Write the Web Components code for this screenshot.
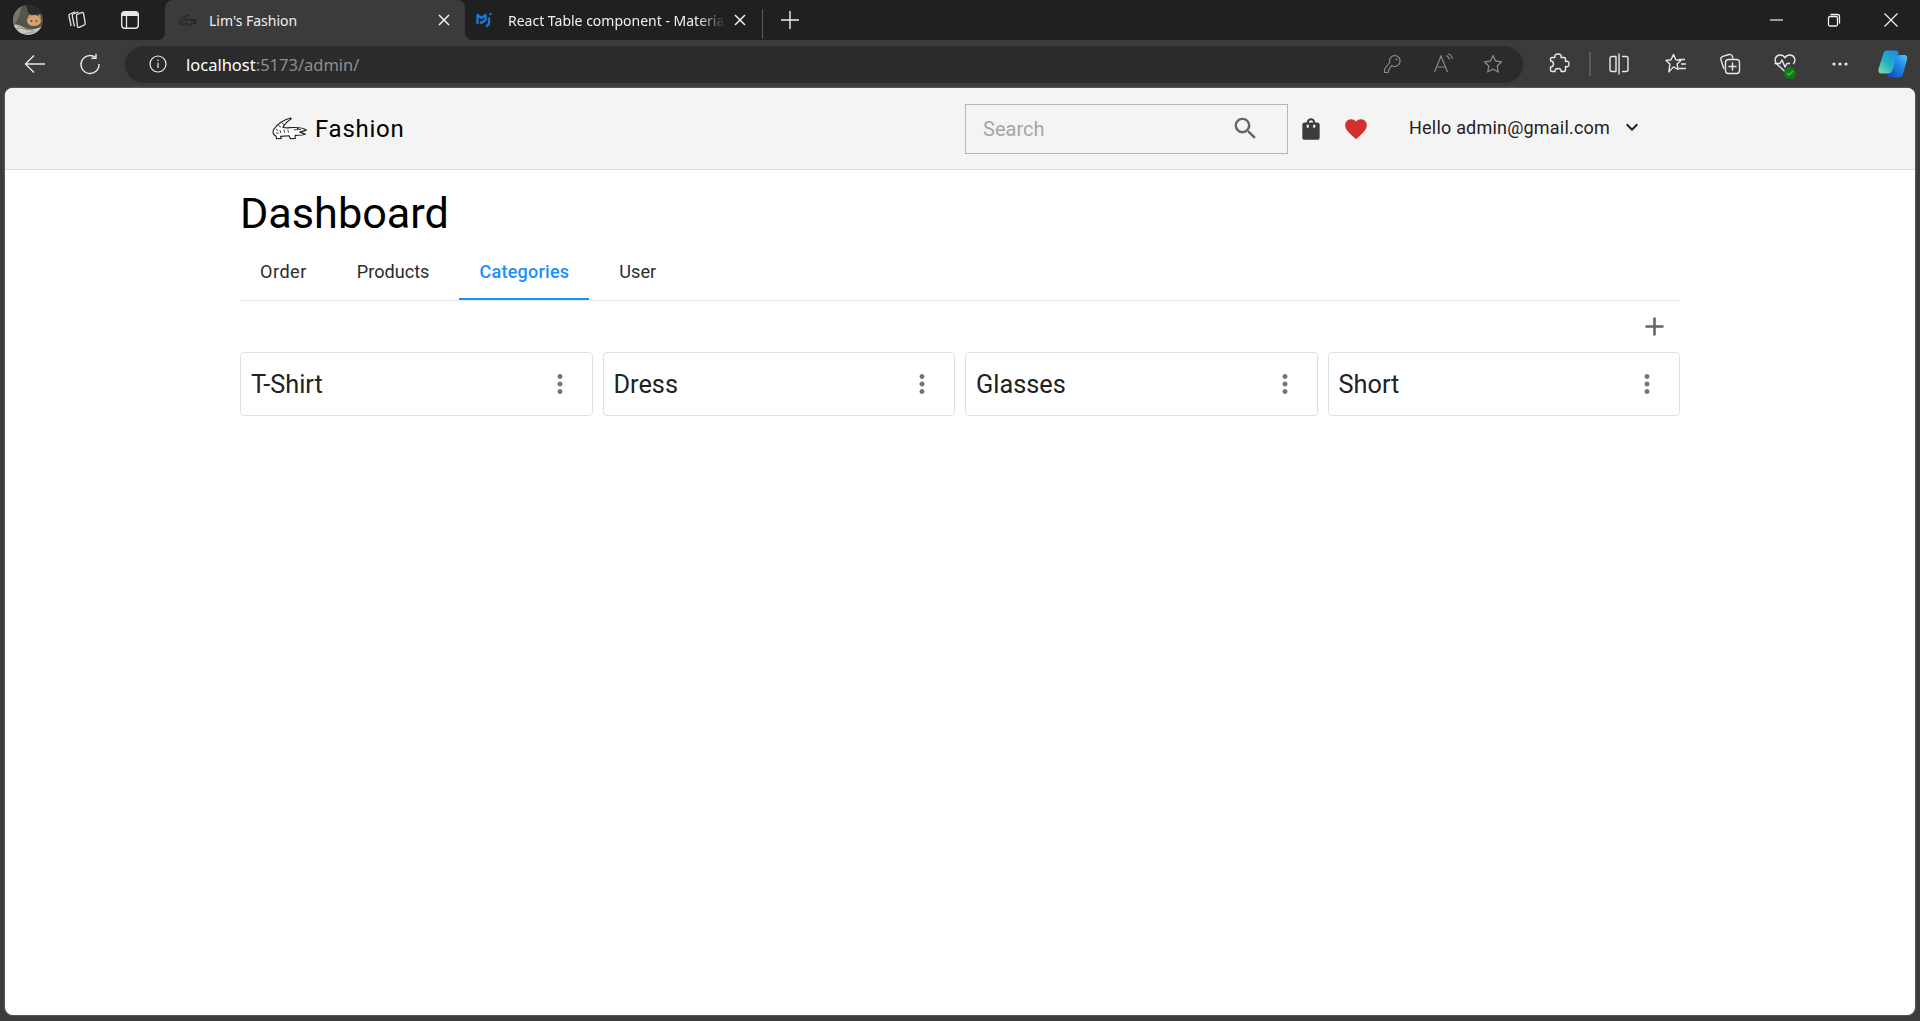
<!DOCTYPE html>
<html lang="en">
<head>
<meta charset="utf-8">
<title>Lim's Fashion</title>
<style>
  html, body { margin: 0; height: 100%; background: #3b3b3b; overflow: hidden; }
  body { display: flex; flex-direction: column; height: 1021px; font-family: Roboto, sans-serif; }
</style>
</head>
<body>
<browser-tabs></browser-tabs>
<browser-toolbar url-host="localhost" url-rest=":5173/admin/"></browser-toolbar>
<page-view>
  <shop-header user="Hello admin@gmail.com"></shop-header>
  <admin-dashboard>
    <dash-tab style="letter-spacing:.5px">Order</dash-tab>
    <dash-tab>Products</dash-tab>
    <dash-tab active>Categories</dash-tab>
    <dash-tab>User</dash-tab>
    <category-card slot="cards">T-Shirt</category-card>
    <category-card slot="cards">Dress</category-card>
    <category-card slot="cards">Glasses</category-card>
    <category-card slot="cards">Short</category-card>
  </admin-dashboard>
</page-view>

<script>
const CROC = `
  <path d="M56 1C38 6 14 20 5 36c-4 9-1 17 7 20l2 8 14-1-2-6 26-2 4 9 14-1v-9c10 0 25 0 31-4l-17-6 20-6c-8-7-24-8-36-8-13 0-27 3-35-1 5-10 15-19 25-25z" fill="var(--croc-fill,#fff)" stroke="var(--croc-line,#222)" stroke-width="3.500" stroke-linejoin="round"/>
  <path d="M11 34l8 6M19 24l8 5M31 15l5 7M24 38l3 9M36 36l3 10M48 36l2 10M66 37l22-1M12 46l8 2" fill="none" stroke="var(--croc-line,#222)" stroke-width="2.500"/>
  <circle cx="78" cy="33" r="2.500" fill="var(--croc-line,#222)"/>`;

const line = 'fill="none" stroke="currentColor" stroke-width="1.3" stroke-linecap="round" stroke-linejoin="round"';

class BrowserTabs extends HTMLElement {
  constructor() {
    super();
    this.attachShadow({ mode: 'open' });
  }

  connectedCallback() {
    this.shadowRoot.innerHTML = `
      <style>
        :host { display: flex; align-items: stretch; height: 40px; background: #202020; color: #f0f0f0; font: 14px "Noto Sans", sans-serif; flex: none; }
        .avatar { width: 30px; height: 30px; margin: 5px 0 0 13px; }
        .btn { display: flex; align-items: center; justify-content: center; width: 24px; height: 40px; color: #e6e6e6; }
        .tab { display: flex; align-items: center; position: relative; }
        .tab.on { width: 300px; background: #3b3b3b; border-radius: 8px 8px 0 0; margin-left: 23px; }
        .tab.on::before, .tab.on::after { content: ""; position: absolute; bottom: 0; width: 8px; height: 8px; }
        .tab.on::before { left: -8px; background: radial-gradient(circle at 0 0, transparent 8px, #3b3b3b 8.5px); }
        .tab.on::after { right: -8px; background: radial-gradient(circle at 100% 0, transparent 8px, #3b3b3b 8.5px); }
        .tab.off { width: 297px; }
        .fav { width: 18px; height: 12px; margin-left: 14px; flex: none; }
        .off .fav { height: 16px; margin-left: 11px; }
        .name { margin-left: 12px; flex: 1; white-space: nowrap; font-size: 14px; }
        .off .name { margin-left: 14px; -webkit-mask-image: linear-gradient(90deg, #000 190px, transparent 218px); }
        .close { width: 12px; height: 12px; margin: 0 15px 0 8px; flex: none; }
        .off .close { margin-right: 16px; }
        .sep { width: 1px; height: 30px; background: #5c5c5c; margin-top: 9px; }
        .plus { width: 18px; height: 18px; margin: 11px 0 0 18px; }
        .win { margin-left: auto; display: flex; }
        .win svg { width: 16px; height: 16px; margin: 12px 0 0 41px; }
        .win svg:last-child { margin-right: 21px; }
      </style>
      <svg class="avatar" viewBox="0 0 30 30">
        <defs><clipPath id="a"><circle cx="15" cy="15" r="15"/></clipPath></defs>
        <g clip-path="url(#a)">
          <rect width="30" height="30" fill="#55544c"/>
          <path d="M0 0h9L6 12 0 22z" fill="#74756c"/>
          <path d="M13 0h17v9l-14 1z" fill="#2c2b27"/>
          <ellipse cx="21" cy="15.500" rx="7" ry="5.500" fill="#d8a26c"/>
          <path d="M15 12l1.500-3 2.500 2zM25 11l2-2 1 4z" fill="#cf9055"/>
          <ellipse cx="18.500" cy="16" rx=".9" ry=".7" fill="#33220f"/><ellipse cx="23.500" cy="16" rx=".9" ry=".7" fill="#33220f"/>
          <path d="M0 20c5-2 10 2 14 4 5 1 10 0 16-3v9H0z" fill="#c9c9c2"/>
          <path d="M1 24c7-2 14 1 20 2M4 21c4 0 7 3 11 4M12 29c4-2 10-2 15-2" fill="none" stroke="#8b8b85" stroke-width=".8"/>
        </g>
      </svg>
      <div class="btn" style="margin-left:22px">
        <svg width="22" height="22" viewBox="0 0 22 22" ${line}>
          <path d="M8.500 3.200 4 5c-.9.4-1.200 1-1 1.900l2 9.600"/>
          <path d="M11.800 3.200 7.200 5c-.8.4-1.100 1-.9 1.900l2 10"/>
          <path d="M10.500 7c-.2-.9.2-1.500 1-1.800l4.200-1.600c1-.3 1.600 0 1.900 1l1.600 9.600c.1.9-.2 1.500-1 1.800l-5 2.300c-1 .3-1.600 0-1.800-.9z"/>
        </svg>
      </div>
      <div class="btn" style="margin-left:29px">
        <svg width="20" height="20" viewBox="0 0 20 20">
          <rect x="1.700" y="1.700" width="16.600" height="16.600" rx="3" fill="none" stroke="currentColor" stroke-width="1.400"/>
          <path d="M2 4.500A2.500 2.500 0 0 1 4.500 2h11A2.500 2.500 0 0 1 18 4.500V6H2z" fill="currentColor"/>
          <path d="M6.500 6v12" stroke="currentColor" stroke-width="1.300"/>
        </svg>
      </div>
      <div class="tab on">
        <svg class="fav" viewBox="0 0 106 66" style="--croc-fill:transparent;--croc-line:#161616">${CROC}</svg>
        <span class="name">Lim's Fashion</span>
        <svg class="close" viewBox="0 0 12 12" stroke="currentColor" stroke-width="1.500"><path d="M1 1l10 10M11 1 1 11"/></svg>
      </div>
      <div class="tab off">
        <svg class="fav" viewBox="0 0 18 16" fill="none" stroke="#1976d2" stroke-width="2.400" stroke-linejoin="round">
          <path d="M1.500 12V3l4 3 4-3v5l-4 3-1.500-1"/>
          <path d="M13 5.500V11c0 1.500-1 2.500-3 3.200"/>
          <circle cx="14.500" cy="2" r="1.200" fill="#1976d2" stroke="none"/>
        </svg>
        <span class="name">React Table component - Materia</span>
        <svg class="close" viewBox="0 0 12 12" stroke="currentColor" stroke-width="1.500"><path d="M1 1l10 10M11 1 1 11"/></svg>
      </div>
      <div class="sep"></div>
      <svg class="plus" viewBox="0 0 18 18" stroke="currentColor" stroke-width="1.400"><path d="M9 0v18M0 9h18"/></svg>
      <div class="win">
        <svg viewBox="0 0 16 16" stroke="currentColor" stroke-width="1.200"><path d="M1 8h13"/></svg>
        <svg viewBox="0 0 16 16" ${line}><rect x="2.500" y="4.500" width="9" height="9.500" rx="1.500"/><path d="M5 2.500h6.500c1.500 0 2 .7 2 2V11"/></svg>
        <svg viewBox="0 0 16 16" stroke="currentColor" stroke-width="1.200"><path d="M1.500 1.500l13 13M14.500 1.500l-13 13"/></svg>
      </div>`;
  }
}

class BrowserToolbar extends HTMLElement {
  constructor() {
    super();
    this.attachShadow({ mode: 'open' });
  }

  connectedCallback() {
    const host = this.getAttribute('url-host');
    const rest = this.getAttribute('url-rest');
    this.shadowRoot.innerHTML = `
      <style>
        :host { display: flex; align-items: center; height: 48px; background: #3b3b3b; color: #e8e8e8; flex: none; font-family: "Noto Sans", sans-serif; }
        svg { display: block; flex: none; }
        .back { margin-left: 24px; }
        .reload { margin-left: 33px; }
        .bar { display: flex; align-items: center; width: 1398px; height: 37px; margin: 0 0 0 24px; border-radius: 19px; background: #2b2b2b; box-sizing: border-box; padding-left: 24px; }
        .url { margin-left: 19px; font-size: 16.500px; color: #fff; }
        .url span { color: #8f8f8f; }
        .end { display: flex; align-items: center; gap: 28px; margin-left: auto; margin-right: 20px; color: #8a8a8a; }
        .divider { width: 2px; height: 24px; background: #5c5c5c; margin: 0 18px 0 19px; }
      </style>
      <svg class="back" width="22" height="20" viewBox="0 0 22 20" fill="none" stroke="currentColor" stroke-width="1.400"><path d="M21 10H2M10 1.500 1.500 10 10 18.500"/></svg>
      <svg class="reload" width="22" height="22" viewBox="0 0 22 22" fill="none" stroke="currentColor" stroke-width="1.400"><path d="M16.500 4.400A9 9 0 1 0 20 11"/><path d="M17 .8v4.400h-4.600"/></svg>
      <div class="bar">
        <svg width="18" height="18" viewBox="0 0 18 18" fill="none" stroke="#eee" stroke-width="1.200"><circle cx="9" cy="9" r="8"/><path d="M9 7.800V13"/><circle cx="9" cy="5.200" r=".8" fill="#eee" stroke="none"/></svg>
        <div class="url">${host}<span>${rest}</span></div>
        <div class="end">
          <svg style="margin-right:3px" width="20" height="20" viewBox="0 0 20 20" fill="none" stroke="currentColor" stroke-width="1.200" stroke-linejoin="round"><path d="M13 1.500a5.500 5.500 0 0 0-5.300 7L2.500 15v3.500H6l1-3 2.500-4a5.500 5.500 0 1 0 3.500-10z"/><circle cx="14.500" cy="5.500" r="1" fill="currentColor" stroke="none"/></svg>
          <svg width="22" height="22" viewBox="0 0 22 22" fill="none" stroke="currentColor" stroke-width="1.200"><path d="M1.500 19 8 3l6.500 16M3.800 14h8.400"/><path d="M13 2.500c2 .7 3 2 3.300 4M15 .8c2.600 1 4 2.700 4.400 5.200"/></svg>
          <svg width="20" height="20" viewBox="0 0 20 20" fill="none" stroke="currentColor" stroke-width="1.300" stroke-linejoin="round"><path d="m10 1.500 2.600 5.500 6 .8-4.400 4.200 1.100 6L10 15.100 4.700 18l1.100-6-4.400-4.200 6-.8z"/></svg>
        </div>
      </div>
      <svg style="margin-left:25px" width="22" height="22" viewBox="0 0 22 22" fill="none" stroke="currentColor" stroke-width="1.400" stroke-linejoin="round"><path d="M7 4.500C6 2 8 1 10 1s4 1 3 3.500h3A1.500 1.500 0 0 1 17.500 6v2.500C20 7.500 21 9.500 21 11s-1 3.500-3.500 2.500V17a1.500 1.500 0 0 1-1.500 1.500h-3c.5-2-1-3-3-3s-3.500 1-3 3H4A1.500 1.500 0 0 1 2.500 17v-3c2 0 3-1 3-3s-1-3-3-3V6A1.500 1.500 0 0 1 4 4.500z"/></svg>
      <div class="divider"></div>
      <svg width="22" height="22" viewBox="0 0 22 22" fill="none" stroke="currentColor" stroke-width="1.400" stroke-linejoin="round" style="margin-left:-1px"><path d="M8 3.500H4a2 2 0 0 0-2 2v11a2 2 0 0 0 2 2h4zM14 3.500h4a2 2 0 0 1 2 2v11a2 2 0 0 1-2 2h-4M11 .5v21"/></svg>
      <svg style="margin-left:34px" width="24" height="22" viewBox="0 0 24 22" fill="none" stroke="currentColor" stroke-width="1.400" stroke-linejoin="round"><path d="m9.500 1.500 2.400 5.300 5 .7-3.800 3.600 1 5.400-4.600-2.600-4.600 5 1-7.800L2 7.500l5-.7z"/><path d="M15 6.500h6M17 11h5M15 15.500h7"/></svg>
      <svg style="margin-left:30px" width="24" height="24" viewBox="0 0 24 24" fill="none" stroke="currentColor" stroke-width="1.400" stroke-linejoin="round"><path d="M6 17 3 8c-.5-2 .3-3 1.800-3.600L11 2.500c2-.4 3 .2 3.500 2l.5 2"/><rect x="7.500" y="7.500" width="14" height="14" rx="3"/><path d="M14.500 10.500v8M10.500 14.500h8"/></svg>
      <div style="position:relative;margin-left:31px;width:24px;height:24px">
        <svg width="24" height="24" viewBox="0 0 24 24" fill="none" stroke="currentColor" stroke-width="1.400" stroke-linejoin="round"><path d="M13 20.500 3.800 12C.5 8.500 2.500 3 7 3c2.300 0 4 1 5 2.800C13 4 14.700 3 17 3c4.500 0 6.500 5.500 3.200 9"/><path d="M1.500 11.500H7l2-3.500 3 7 2-3.500h3"/></svg>
        <svg style="position:absolute;right:1px;bottom:-3px" width="12" height="12" viewBox="0 0 12 12"><circle cx="6" cy="6" r="6" fill="#107c10"/><path d="m3 6 2 2 4-4" fill="none" stroke="#5fb05f" stroke-width="1.200"/></svg>
      </div>
      <svg style="margin-left:35px" width="16" height="4" viewBox="0 0 16 4" fill="currentColor"><circle cx="2" cy="2" r="1.600"/><circle cx="8" cy="2" r="1.600"/><circle cx="14" cy="2" r="1.600"/></svg>
      <svg style="margin-left:30px" width="30" height="28" viewBox="0 0 30 28">
        <defs>
          <linearGradient id="c1" x1="0" y1="1" x2=".8" y2="0"><stop offset="0" stop-color="#7fe0a0"/><stop offset=".5" stop-color="#23b0c8"/><stop offset="1" stop-color="#1e8be0"/></linearGradient>
          <linearGradient id="c2" x1="0" y1="1" x2="1" y2="0"><stop offset="0" stop-color="#1240c0"/><stop offset=".6" stop-color="#1c8ee8"/><stop offset="1" stop-color="#55c8f5"/></linearGradient>
        </defs>
        <path d="M9 .5h9c2.500 0 3 2 2.200 4L15 20c-1 2.500-3 3.500-5 3.500H3.500C.8 23.500-.3 21 .8 18L5 4.500C5.800 2 7 .5 9 .5z" fill="url(#c1)"/>
        <path d="M21 5h5c2.500 0 3.800 2 3 4.500L25 24c-.8 2.500-2.500 3.500-4.500 3.500h-9c-2 0-2.800-1.500-1-3 3-1.500 4-4 5-7l3-9.500C19 6.500 20 5 21 5z" fill="url(#c2)"/>
      </svg>`;
  }
}

class PageView extends HTMLElement {
  constructor() {
    super();
    this.attachShadow({ mode: 'open' });
    this.shadowRoot.innerHTML = `
      <style>
        :host { display: flex; flex-direction: column; flex: 1; min-height: 0; margin: 0 5px 6px; background: #fff; border-radius: 8px; overflow: hidden; box-shadow: 0 0 2px rgba(255,255,255,.5); }
      </style>
      <slot></slot>`;
  }
}

class ShopHeader extends HTMLElement {
  constructor() {
    super();
    this.attachShadow({ mode: 'open' });
  }

  connectedCallback() {
    this.shadowRoot.innerHTML = `
      <style>
        :host { display: flex; align-items: center; justify-content: space-between; flex: none; height: 81px; padding: 0 271px 0 267px; background: #f4f4f4; border-bottom: 1px solid #dcdcdc; font-family: Roboto, sans-serif; }
        svg { display: block; flex: none; }
        .logo { display: flex; align-items: center; }
        .logo b { font-weight: 400; font-size: 24px; color: #000; margin-left: 8px; letter-spacing: .75px; }
        .right { display: flex; align-items: center; }
        .search { display: flex; align-items: center; justify-content: space-between; box-sizing: border-box; width: 323px; height: 50px; border: 1px solid #b5b5b5; padding: 0 27px 0 17px; }
        .search span { font-size: 20px; color: #a6a6a6; }
        .user { display: flex; align-items: center; margin-left: 40px; margin-bottom: 3px; font-size: 18px; color: #222; letter-spacing: .2px; }
      </style>
      <div class="logo">
        <svg width="35" height="23" viewBox="0 0 106 66">${CROC}</svg>
        <b>Fashion</b>
      </div>
      <div class="right">
        <div class="search">
          <span>Search</span>
          <svg width="29" height="29" viewBox="0 0 24 24" fill="#666"><path d="M15.500 14h-.79l-.28-.27C15.410 12.590 16 11.110 16 9.500 16 5.910 13.090 3 9.500 3S3 5.910 3 9.500 5.910 16 9.500 16c1.610 0 3.090-.59 4.230-1.570l.27.28v.79l5 4.990L20.490 19l-4.990-5zm-6 0C7.010 14 5 11.990 5 9.500S7.010 5 9.500 5 14 7.010 14 9.500 11.990 14 9.500 14z"/></svg>
        </div>
        <svg style="margin-left:10px" width="26" height="26" viewBox="0 0 24 24" fill="#3c3c3c"><path d="M18 6h-2c0-2.210-1.790-4-4-4S8 3.790 8 6H6c-1.100 0-2 .9-2 2v12c0 1.100.9 2 2 2h12c1.100 0 2-.9 2-2V8c0-1.100-.9-2-2-2zm-8 4c0 .55-.45 1-1 1s-1-.45-1-1V8h2v2zm2-6c1.100 0 2 .9 2 2h-4c0-1.100.9-2 2-2zm4 6c0 .55-.45 1-1 1s-1-.45-1-1V8h2v2z"/></svg>
        <svg style="margin-left:19px" width="26" height="26" viewBox="0 0 24 24" fill="#d32f2f"><path d="M12 21.350l-1.450-1.320C5.400 15.360 2 12.280 2 8.500 2 5.420 4.420 3 7.500 3c1.740 0 3.410.81 4.500 2.090C13.090 3.810 14.760 3 16.500 3 19.580 3 22 5.420 22 8.500c0 3.780-3.400 6.860-8.550 11.540L12 21.350z"/></svg>
        <div class="user">
          <span>${this.getAttribute('user')}</span>
          <svg style="margin-left:10px" width="24" height="24" viewBox="0 0 24 24" fill="#222"><path d="M7.410 8.590 12 13.170l4.590-4.580L18 10l-6 6-6-6 1.410-1.410z"/></svg>
        </div>
      </div>`;
  }
}

class AdminDashboard extends HTMLElement {
  constructor() {
    super();
    this.attachShadow({ mode: 'open' });
    this.shadowRoot.innerHTML = `
      <style>
        :host { display: block; padding: 0 235px; font-family: Roboto, sans-serif; }
        h1 { margin: 22px 0 0; font-size: 43.200px; line-height: 44px; font-weight: 400; color: #000; }
        .tabs { display: flex; gap: 10px; height: 56px; margin-top: 9px; box-sizing: border-box; border-bottom: 1px solid #e6e6e6; }
        .tools { display: flex; justify-content: flex-end; height: 51px; align-items: center; }
        .tools svg { display: block; margin-right: 10px; }
        .cards { display: grid; grid-template-columns: repeat(4, 1fr); gap: 10px; }
      </style>
      <h1>Dashboard</h1>
      <div class="tabs"><slot></slot></div>
      <div class="tools">
        <svg width="31" height="31" viewBox="0 0 24 24" fill="#666"><path d="M19 13h-6v6h-2v-6H5v-2h6V5h2v6h6v2z"/></svg>
      </div>
      <div class="cards"><slot name="cards"></slot></div>`;
  }
}

class DashTab extends HTMLElement {
  constructor() {
    super();
    this.attachShadow({ mode: 'open' });
    this.shadowRoot.innerHTML = `
      <style>
        :host { display: flex; align-items: center; height: 55px; padding: 0 20px 2px; box-sizing: border-box; font-size: 18.100px; color: #2b2b2b; }
        :host([active]) { color: #1890ff; font-weight: 500; font-size: 18px; letter-spacing: .25px; border-bottom: 2px solid #1890ff; padding-bottom: 0; }
      </style>
      <slot></slot>`;
  }
}

class CategoryCard extends HTMLElement {
  constructor() {
    super();
    this.attachShadow({ mode: 'open' });
    this.shadowRoot.innerHTML = `
      <style>
        :host { display: flex; align-items: center; justify-content: space-between; box-sizing: border-box; height: 64px; padding: 0 17px 0 10px; border: 1px solid #e0e0e0; border-radius: 4px; background: #fff; font-size: 25.300px; color: #222; }
        svg { display: block; flex: none; }
      </style>
      <slot></slot>
      <svg width="30" height="30" viewBox="0 0 24 24" fill="#757575"><path d="M12 8c1.100 0 2-.9 2-2s-.9-2-2-2-2 .9-2 2 .9 2 2 2zm0 2c-1.100 0-2 .9-2 2s.9 2 2 2 2-.9 2-2-.9-2-2-2zm0 6c-1.100 0-2 .9-2 2s.9 2 2 2 2-.9 2-2-.9-2-2-2z"/></svg>`;
  }
}

customElements.define('browser-tabs', BrowserTabs);
customElements.define('browser-toolbar', BrowserToolbar);
customElements.define('page-view', PageView);
customElements.define('shop-header', ShopHeader);
customElements.define('admin-dashboard', AdminDashboard);
customElements.define('dash-tab', DashTab);
customElements.define('category-card', CategoryCard);
</script>
</body>
</html>
